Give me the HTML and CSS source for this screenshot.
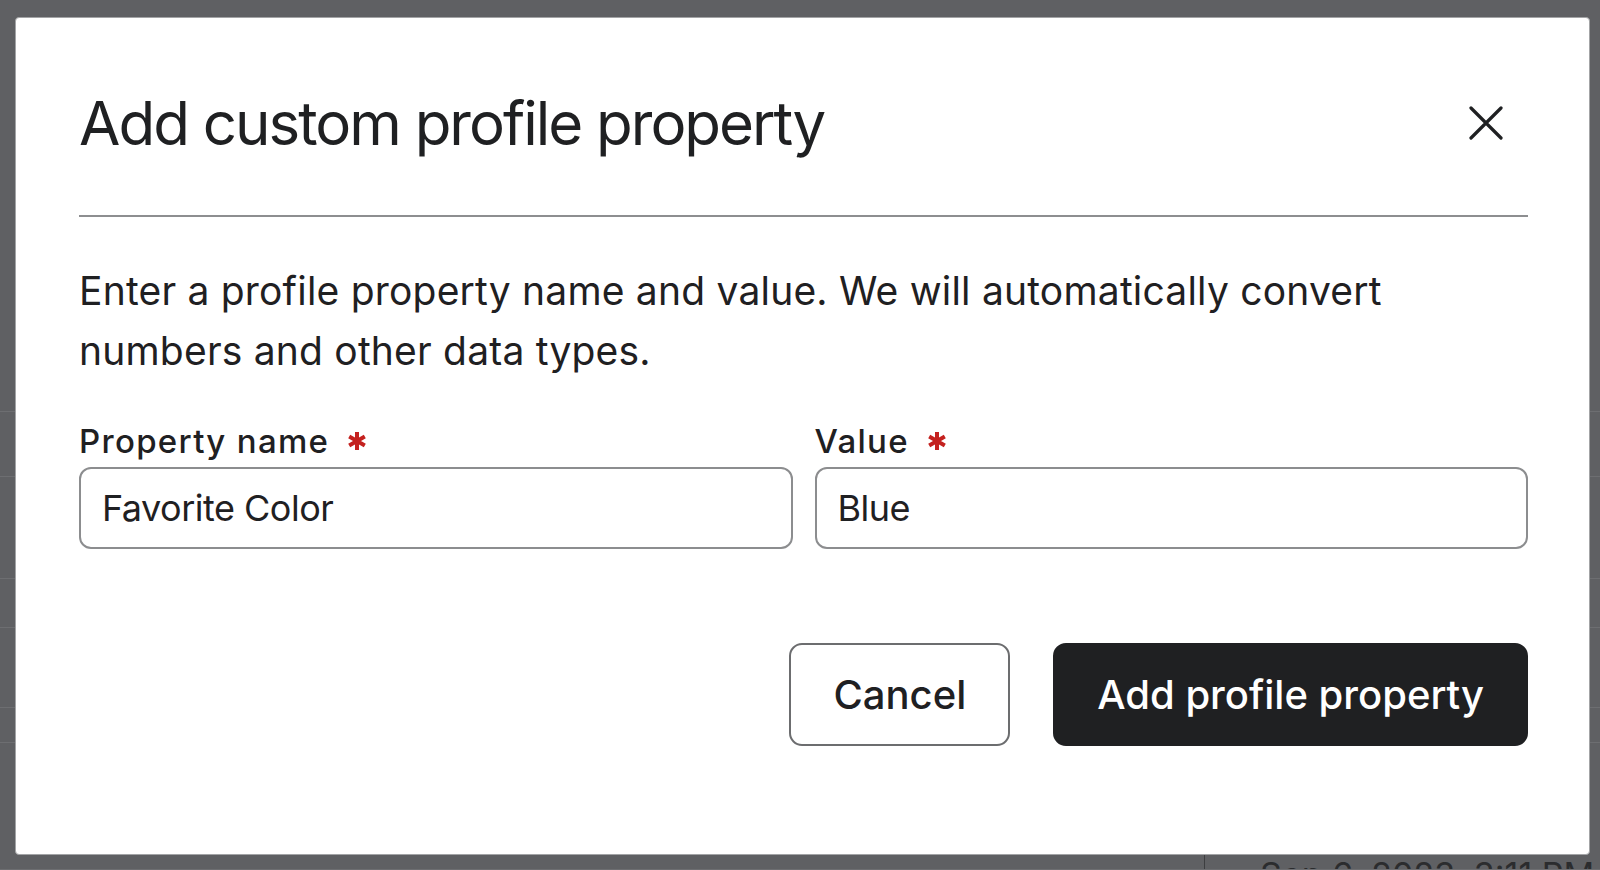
FILE: index.html
```html
<!DOCTYPE html>
<html lang="en">
<head>
<meta charset="utf-8">
<title>Add custom profile property</title>
<link rel="stylesheet" href="styles.css">
</head>
<body>
<div class="page">
  <div class="row r1"></div>
  <div class="row r2"></div>
  <div class="row r3"></div>
  <div class="row r4"></div>
  <div class="row r5"></div>
  <div class="row r6"></div>
  <div class="row r7">
    <div class="cell c1"></div>
    <div class="cell c2">Sep 6, 2023, 3:11 PM</div>
  </div>
</div>

<div class="modal" role="dialog" aria-labelledby="dlg-title">
  <header class="modal-header">
    <h1 id="dlg-title" class="modal-title">Add custom profile property</h1>
    <button class="close-btn" aria-label="Close">
      <svg viewBox="0 0 34 34" width="34" height="34" aria-hidden="true">
        <path d="M2 2 L32 32 M32 2 L2 32" stroke="#1f2022" stroke-width="3.2" stroke-linecap="round" fill="none"/>
      </svg>
    </button>
  </header>
  <p class="modal-desc">Enter a profile property name and value. We will automatically convert numbers and other data types.</p>
  <div class="fields">
    <label class="field">
      <span class="field-label">Property name <svg class="req" viewBox="0 0 20 20" width="20" height="20" aria-label="required"><path d="M10 1 V19 M2.2 5.5 L17.8 14.5 M17.8 5.5 L2.2 14.5" stroke="#c4211f" stroke-width="4" fill="none"/></svg></span>
      <input class="input" type="text" value="Favorite Color">
    </label>
    <label class="field">
      <span class="field-label">Value <svg class="req" viewBox="0 0 20 20" width="20" height="20" aria-label="required"><path d="M10 1 V19 M2.2 5.5 L17.8 14.5 M17.8 5.5 L2.2 14.5" stroke="#c4211f" stroke-width="4" fill="none"/></svg></span>
      <input class="input" type="text" value="Blue">
    </label>
  </div>
  <div class="actions">
    <button class="btn btn-secondary">Cancel</button>
    <button class="btn btn-primary">Add profile property</button>
  </div>
</div>
</body>
</html>
```

FILE: styles.css
```css
* { box-sizing: border-box; }

html, body {
  margin: 0;
  padding: 0;
  width: 1600px;
  height: 870px;
  overflow: hidden;
}

body {
  background: #5f6063;
  font-family: "Inter", "Noto Sans", "Liberation Sans", sans-serif;
  color: #1f2022;
}

/* dimmed page behind the dialog */
.page {
  display: flex;
  flex-direction: column;
}
.row { border-bottom: 1px solid #6d6e71; }
.r1 { height: 412px; }
.r2 { height: 65px; }
.r3 { height: 102px; }
.r4 { height: 49px; }
.r5 { height: 80px; }
.r6 { height: 35px; }
.r7 {
  height: 127px;
  display: flex;
  align-items: flex-end;
}
.cell { height: 20px; }
.c1 { width: 1205px; border-right: 1px solid #3d3e40; }
.c2 {
  padding-left: 55px;
  font-size: 34px;
  line-height: 40px;
  color: #2b2c2e;
  white-space: nowrap;
  overflow: hidden;
  height: 14px;
}

/* dialog */
.modal {
  position: fixed;
  left: 15px;
  top: 17px;
  width: 1575px;
  height: 838px;
  background: #ffffff;
  border: 1px solid #a3a4a6;
  border-radius: 4px;
  padding: 0 61px 0 63px;
  display: flex;
  flex-direction: column;
}

.modal-header {
  display: flex;
  align-items: center;
  justify-content: space-between;
  padding: 69px 0 56px;
  border-bottom: 2px solid #8d8e90;
}

.modal-title {
  margin: 0;
  font-size: 60px;
  line-height: 72px;
  font-weight: 400;
  letter-spacing: -2px;
}

.close-btn {
  width: 48px;
  height: 48px;
  margin-right: 18px;
  padding: 0;
  border: 0;
  background: transparent;
  display: flex;
  align-items: center;
  justify-content: center;
}

.modal-desc {
  margin: 44px 0 0;
  font-size: 39px;
  line-height: 60px;
  letter-spacing: 0.2px;
}

.fields {
  margin-top: 40px;
  display: grid;
  grid-template-columns: 1fr 1fr;
  gap: 22px;
}

.field {
  display: flex;
  flex-direction: column;
  gap: 6px;
}

.field-label {
  display: flex;
  align-items: center;
  gap: 18px;
  font-size: 33px;
  line-height: 40px;
  font-weight: 500;
  letter-spacing: 1.3px;
}

.req { display: block; }

.input {
  height: 82px;
  border: 2px solid #8c8d8f;
  border-radius: 12px;
  padding: 0 21px;
  font-family: inherit;
  font-size: 36px;
  letter-spacing: -0.5px;
  color: #1f2022;
  background: #fff;
  outline: none;
}

.actions {
  margin-top: 94px;
  display: flex;
  justify-content: flex-end;
  gap: 43px;
}

.btn {
  height: 103px;
  padding: 0 42px;
  border-radius: 13px;
  font-family: inherit;
  font-size: 40px;
  font-weight: 500;
  line-height: 1;
}

.btn-secondary {
  background: #fff;
  color: #1f2022;
  border: 2px solid #6c6d6f;
}

.btn-primary {
  background: #1f2022;
  color: #ffffff;
  border: 2px solid #1f2022;
}
```
